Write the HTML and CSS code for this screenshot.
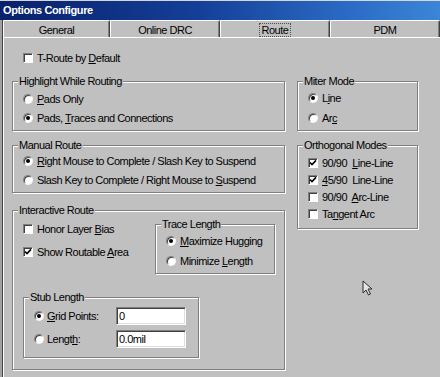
FILE: index.html
```html
<!DOCTYPE html>
<html lang="en">
<head>
  <meta charset="UTF-8" />
  <title>Options Configure</title>
  <link rel="stylesheet" href="styles.css">
</head>
<body>

<div class="window">
  <div class="titlebar">Options Configure</div>

  <div class="dialog">
    <div class="tabs">
      <div class="tab first">General</div>
      <div class="tab">Online DRC</div>
      <div class="tab active"><span class="focus">Route</span></div>
      <div class="tab">PDM</div>
    </div>

    <div class="panel">
      <div class="row top-option"><span class="check"></span><span>T-Route by <u>D</u>efault</span></div>

      <div class="columns">
        <div class="col-left">
          <div class="group highlight">
            <div class="legend">Highlight While Routing</div>
            <div class="row"><span class="radio"></span><span><u>P</u>ads Only</span></div>
            <div class="row"><span class="radio on"></span><span>Pads, <u>T</u>races and Connections</span></div>
          </div>

          <div class="group manual">
            <div class="legend">Manual Route</div>
            <div class="row"><span class="radio on"></span><span><u>R</u>ight Mouse to Complete / Slash Key to Suspend</span></div>
            <div class="row"><span class="radio"></span><span>Slash Key to Complete / Right Mouse to <u>S</u>uspend</span></div>
          </div>

          <div class="group interactive">
            <div class="legend">Interactive Route</div>
            <div class="ir-top">
              <div class="ir-checks">
                <div class="row"><span class="check"></span><span>Honor Layer <u>B</u>ias</span></div>
                <div class="row second"><span class="check"><svg viewBox="0 0 8 8" width="8" height="8"><path d="M1 3.5 L3 5.6 L7 1.4" fill="none" stroke="#000" stroke-width="1.6"/></svg></span><span>Show Routable <u>A</u>rea</span></div>
              </div>
              <div class="group trace">
                <div class="legend">Trace Length</div>
                <div class="row"><span class="radio on"></span><span><u>M</u>aximize Hugging</span></div>
                <div class="row"><span class="radio"></span><span>Minimize <u>L</u>ength</span></div>
              </div>
            </div>

            <div class="group stub">
              <div class="legend">Stub Length</div>
              <div class="row stub-row">
                <span class="radio on"></span><span class="stub-label"><u>G</u>rid Points:</span>
                <input class="field" type="text" value="0">
              </div>
              <div class="row stub-row">
                <span class="radio"></span><span class="stub-label">Lengt<u>h</u>:</span>
                <input class="field" type="text" value="0.0mil">
              </div>
            </div>
          </div>
        </div>

        <div class="col-right">
          <div class="group miter">
            <div class="legend">Miter Mode</div>
            <div class="row"><span class="radio on"></span><span>L<u>i</u>ne</span></div>
            <div class="row"><span class="radio"></span><span>Ar<u>c</u></span></div>
          </div>

          <div class="group ortho">
            <div class="legend">Orthogonal Modes</div>
            <div class="row"><span class="check"><svg viewBox="0 0 8 8" width="8" height="8"><path d="M1 3.5 L3 5.6 L7 1.4" fill="none" stroke="#000" stroke-width="1.6"/></svg></span><span>90/90&nbsp; <u>L</u>ine-Line</span></div>
            <div class="row"><span class="check"><svg viewBox="0 0 8 8" width="8" height="8"><path d="M1 3.5 L3 5.6 L7 1.4" fill="none" stroke="#000" stroke-width="1.6"/></svg></span><span><u>4</u>5/90&nbsp; Line-Line</span></div>
            <div class="row"><span class="check"></span><span>90/90&nbsp; <u>A</u>rc-Line</span></div>
            <div class="row"><span class="check"></span><span>Ta<u>n</u>gent Arc</span></div>
          </div>
        </div>
      </div>

      <svg class="pointer" width="12" height="16" viewBox="0 0 12 16">
        <path d="M1 1 L1 13 L4 10 L6.5 15 L8.5 14 L6 9 L10 9 Z" fill="#e4e4e4" stroke="#2a2a2a" stroke-width="1"/>
      </svg>
    </div>
  </div>
</div>

</body>
</html>
```

FILE: styles.css
```css
* {
  margin: 0;
  padding: 0;
  box-sizing: border-box;
}

body {
  font-family: 'Liberation Sans', Arial, sans-serif;
  font-size: 11px;
  letter-spacing: -0.5px;
  color: #000;
  background: #c0c0c0;
  overflow: hidden;
}

u {
  text-decoration: underline;
  text-underline-offset: 1px;
}

.window {
  height: 377px;
  border-top: 1px solid #d6d6d6;
  background: #c0c0c0;
}

.titlebar {
  height: 19px;
  line-height: 19px;
  padding-left: 3px;
  font-weight: bold;
  letter-spacing: -0.4px;
  color: #fff;
  background: linear-gradient(to right, #08216a, #143f98 45%, #2b6cc6 80%, #3b86d8);
}

.dialog {
  padding-left: 3px;
  box-shadow: inset 2px 0 0 #a2a2a2, inset 3px 0 0 #404040;
}

/* tab strip */
.tabs {
  display: flex;
  height: 17px;
}

.tab {
  width: 110px;
  height: 17px;
  flex: none;
  padding-top: 3px;
  line-height: 13px;
  text-align: center;
  border-top: 1px solid #fff;
  border-left: 1px solid #fff;
  border-right: 1px solid #404040;
  border-radius: 2px 2px 0 0;
  box-shadow: inset -1px 0 0 #808080;
  background: #c0c0c0;
}

.tab.first {
  width: 107px;
}

.tab.active {
  position: relative;
  height: 18px;
  margin-bottom: -1px;
}

.focus {
  outline: 1px dotted #505050;
  outline-offset: 0;
  padding: 0 2px;
}

/* page */
.panel {
  position: relative;
  height: 340px;
  border-top: 1px solid #fff;
  border-left: 1px solid #fff;
  padding: 10px 0 0 8px;
}

.row {
  display: flex;
  align-items: center;
  gap: 4px;
  height: 19px;
  white-space: nowrap;
}

.top-option {
  padding-left: 11px;
}

.columns {
  display: flex;
  gap: 12px;
  margin-top: 14px;
}

.col-left {
  width: 273px;
}

.col-right {
  width: 121px;
}

/* etched group boxes */
.group {
  border: 1px solid #808080;
  box-shadow: 1px 1px 0 #fff, inset 1px 1px 0 #fff;
  padding: 0 10px;
}

.legend {
  display: table;
  margin: -7px 0 0 -5px;
  padding: 0 1px;
  line-height: 13px;
  background: #c0c0c0;
}

.highlight {
  padding-bottom: 3px;
}

.highlight .legend {
  margin-bottom: 1px;
}

.manual {
  margin-top: 14px;
  padding-bottom: 3px;
}

.manual .legend {
  margin-bottom: -1px;
}

.interactive {
  margin-top: 17px;
  padding-right: 9px;
  padding-bottom: 11px;
}

.ir-top {
  display: flex;
}

.ir-checks {
  flex: 1;
  padding-top: 2px;
}

.ir-checks .second {
  margin-top: 4px;
}

.trace {
  width: 120px;
  margin-top: 7px;
  padding-bottom: 2px;
}

.trace .row,
.miter .row {
  height: 20px;
}

.stub {
  width: 176px;
  margin-top: 23px;
  padding-bottom: 7px;
}

.stub-row {
  height: 23px;
  gap: 3px;
}

.stub-label {
  width: 66px;
}

.field {
  width: 70px;
  height: 18px;
  padding-left: 2px;
  font: inherit;
  letter-spacing: inherit;
  color: #000;
  background: #fff;
  border: 1px solid;
  border-color: #808080 #fff #fff #808080;
  box-shadow: inset 1px 1px 0 #404040, inset -1px -1px 0 #dfdfdf;
  outline: none;
}

.miter {
  padding-bottom: 2px;
}

.ortho {
  margin-top: 14px;
  padding-bottom: 6px;
}

.ortho .legend {
  margin-bottom: 2px;
}

.ortho .row {
  height: 17px;
}

/* controls */
.check,
.radio {
  width: 10px;
  height: 10px;
  flex: none;
  background: #fff;
  border: 1px solid;
  border-color: #808080 #fff #fff #808080;
  box-shadow: inset 1px 1px 0 #404040;
}

.check svg {
  display: block;
}

.radio {
  border-radius: 50%;
  border-color: #808080 #f4f4f4 #f4f4f4 #808080;
}

.radio.on::after {
  content: "";
  display: block;
  width: 4px;
  height: 4px;
  margin: 2px;
  border-radius: 50%;
  background: #000;
}

.pointer {
  position: absolute;
  left: 358px;
  top: 242px;
}
```
